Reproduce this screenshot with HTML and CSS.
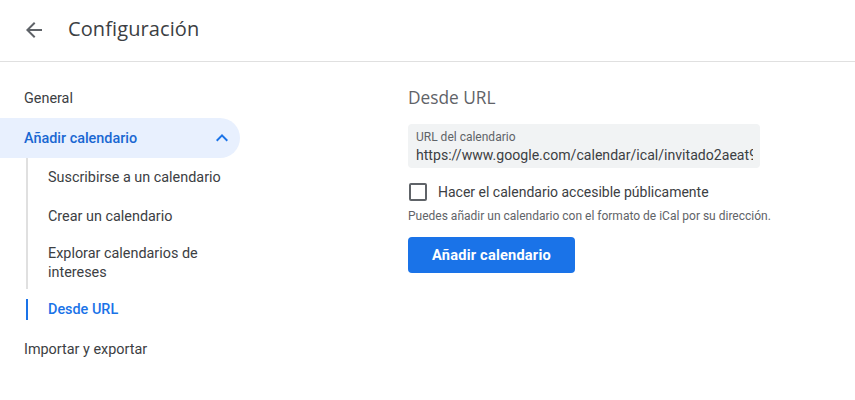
FILE: index.html
```html
<!DOCTYPE html>
<html lang="es">
<head>
<meta charset="utf-8">
<title>Configuración</title>
<link rel="stylesheet" href="styles.css">
</head>
<body>
<header class="topbar">
  <button class="back" aria-label="Atrás">
    <svg width="24" height="24" viewBox="0 0 24 24"><path d="M20 11H7.83l5.59-5.59L12 4l-8 8 8 8 1.41-1.41L7.83 13H20v-2z" fill="#5f6368"/></svg>
  </button>
  <h1 class="title">Configuración</h1>
</header>
<div class="layout">
  <nav class="sidebar">
    <div class="nav-item">General</div>
    <div class="nav-item active">
      <span>Añadir calendario</span>
      <svg class="chev" width="24" height="24" viewBox="0 0 24 24"><path d="M7.41 15.41L12 10.83l4.59 4.58L18 14l-6-6-6 6z" fill="#1a73e8"/></svg>
    </div>
    <div class="sub">
      <div class="sub-item">Suscribirse a un calendario</div>
      <div class="sub-item">Crear un calendario</div>
      <div class="sub-item two">Explorar calendarios de<br>intereses</div>
      <div class="sub-item selected">Desde URL</div>
    </div>
    <div class="nav-item">Importar y exportar</div>
  </nav>
  <main class="main">
    <h2 class="heading">Desde URL</h2>
    <div class="field">
      <div class="field-label">URL del calendario</div>
      <div class="field-value">https://www.google.com/calendar/ical/invitado2aeat9</div>
    </div>
    <label class="check">
      <span class="box"></span>
      <span class="check-label">Hacer el calendario accesible públicamente</span>
    </label>
    <p class="helper">Puedes añadir un calendario con el formato de iCal por su dirección.</p>
    <button class="primary">Añadir calendario</button>
  </main>
</div>
</body>
</html>
```
FILE: styles.css
```css
* { box-sizing: border-box; }
html, body { margin: 0; padding: 0; background: #fff; }
body {
  font-family: Roboto, "Liberation Sans", Arial, sans-serif;
  color: #3c4043;
  width: 855px;
  height: 400px;
  overflow: hidden;
}
.topbar {
  height: 62px;
  border-bottom: 1px solid #e0e0e0;
  display: flex;
  align-items: center;
  padding-left: 22px;
}
.back {
  width: 24px;
  height: 24px;
  padding: 0;
  border: 0;
  background: none;
  display: flex;
  margin-right: 22px;
  margin-top: -2px;
}
.title {
  margin: 0;
  font-family: "Open Sans", Roboto, sans-serif;
  font-weight: 400;
  font-size: 20px;
  color: #3c4043;
  letter-spacing: 0.1px;
  margin-top: -4px;
}
.layout {
  display: flex;
}
.sidebar {
  width: 240px;
  padding-top: 16px;
  flex: none;
}
.nav-item {
  height: 40px;
  display: flex;
  align-items: center;
  padding-left: 24px;
  font-size: 14.4px;
  color: #3c4043;
}
.nav-item.active {
  background: #e8f0fe;
  color: #1967d2;
  font-weight: 500;
  border-radius: 0 20px 20px 0;
  justify-content: space-between;
  padding-right: 6px;
}
.chev { display: block; }
.sub {
  margin-left: 26px;
}
.sub-item {
  min-height: 39px;
  padding: 7.5px 0 7.5px 20px;
  font-size: 14.4px;
  line-height: 19px;
  display: flex;
  align-items: center;
  border-left: 2px solid #e0e0e0;
  color: #3c4043;
}
.sub-item.two { min-height: 53px; }
.sub-item.selected {
  border-left-color: transparent;
  color: #1a73e8;
  font-weight: 500;
  position: relative;
  min-height: 40px;
}
.sub-item.selected::before {
  content: "";
  position: absolute;
  left: -2px;
  top: 10px;
  width: 2px;
  height: 21px;
  background: #1a73e8;
}
.main {
  padding-left: 168px;
  padding-top: 24px;
  width: 615px;
}
.heading {
  margin: 0 0 14px;
  font-family: "Open Sans", Roboto, sans-serif;
  font-size: 17.3px;
  font-weight: 400;
  color: #5f6368;
  line-height: 24px;
}
.field {
  width: 352px;
  height: 44px;
  background: #f1f3f4;
  border-radius: 4px;
  padding: 6px 0 0 8px;
  overflow: hidden;
}
.field-label {
  font-size: 12px;
  line-height: 14px;
  color: #5f6368;
}
.field-value {
  width: 337px;
  margin-top: 1px;
  font-size: 14.1px;
  line-height: 20px;
  color: #3c4043;
  white-space: nowrap;
  overflow: hidden;
}
.check {
  display: flex;
  align-items: center;
  margin-top: 15px;
  height: 18px;
}
.box {
  width: 18px;
  height: 18px;
  border: 2px solid #5f6368;
  border-radius: 2px;
  margin-left: 1px;
  margin-right: 11px;
}
.check-label {
  font-size: 14px;
  color: #3c4043;
}
.helper {
  margin: 7px 0 0;
  font-size: 12px;
  line-height: 16px;
  color: #5f6368;
}
.primary {
  display: block;
  margin-top: 13px;
  height: 36px;
  width: 167px;
  border: 0;
  border-radius: 4px;
  background: #1a73e8;
  color: #fff;
  font-family: Roboto, sans-serif;
  font-size: 14.6px;
  font-weight: 700;
  letter-spacing: 0.2px;
}
```
